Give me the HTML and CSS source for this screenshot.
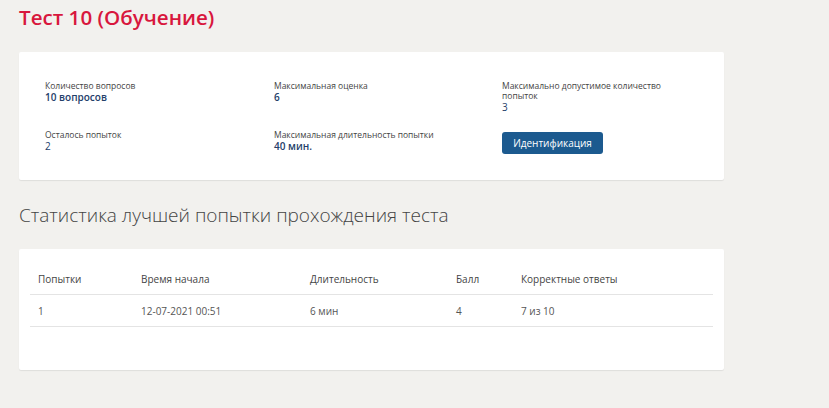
FILE: index.html
```html
<!DOCTYPE html>
<html lang="ru">
<head>
    <meta charset="UTF-8">
    <title>Тест 10 (Обучение)</title>
    <link rel="stylesheet" href="styles.css">
</head>
<body>
    <div class="page">
        <h1 class="test-title">Тест 10 (Обучение)</h1>

        <!-- Test info -->
        <div class="card info-card">
            <div class="info-grid">
                <div class="info-item">
                    <div class="info-label">Количество вопросов</div>
                    <div class="info-value">10 вопросов</div>
                </div>
                <div class="info-item">
                    <div class="info-label">Максимальная оценка</div>
                    <div class="info-value">6</div>
                </div>
                <div class="info-item">
                    <div class="info-label">Максимально допустимое количество попыток</div>
                    <div class="info-value plain">3</div>
                </div>
                <div class="info-item">
                    <div class="info-label">Осталось попыток</div>
                    <div class="info-value plain">2</div>
                </div>
                <div class="info-item">
                    <div class="info-label">Максимальная длительность попытки</div>
                    <div class="info-value">40 мин.</div>
                </div>
                <div class="info-item">
                    <button class="btn-primary">Идентификация</button>
                </div>
            </div>
        </div>

        <h2 class="section-title">Статистика лучшей попытки прохождения теста</h2>

        <!-- Best attempt -->
        <div class="card stats-card">
            <table class="stats-table">
                <thead>
                    <tr>
                        <th class="col-attempt">Попытки</th>
                        <th class="col-start">Время начала</th>
                        <th class="col-duration">Длительность</th>
                        <th class="col-score">Балл</th>
                        <th>Корректные ответы</th>
                    </tr>
                </thead>
                <tbody>
                    <tr>
                        <td>1</td>
                        <td>12-07-2021 00:51</td>
                        <td>6 мин</td>
                        <td>4</td>
                        <td>7 из 10</td>
                    </tr>
                </tbody>
            </table>
        </div>
    </div>
</body>
</html>
```

FILE: styles.css
```css
html, body {
    margin: 0;
    padding: 0;
}
body {
    background: #f2f1ee;
    font-family: "Open Sans", "Noto Sans", Arial, sans-serif;
    color: #444;
}
.page {
    width: 705px;
    padding: 0 19px 30px;
}
.test-title {
    margin: 0;
    padding-top: 4px;
    height: 48px;
    font-size: 20.6px;
    font-weight: 600;
    line-height: 26px;
    color: #d8173d;
}
.card {
    background: #fff;
    border-radius: 2px;
    box-shadow: 0 1px 1px rgba(0, 0, 0, 0.08);
}
.info-card {
    height: 128px;
    box-sizing: border-box;
    padding: 29px 26px 0;
}
.info-grid {
    display: grid;
    grid-template-columns: 229px 228px 170px;
    row-gap: 17px;
}
.info-label {
    font-size: 8.5px;
    line-height: 10px;
    color: #444;
}
.info-value {
    font-size: 10px;
    line-height: 12px;
    font-weight: 600;
    color: #24406a;
}
.info-value.plain {
    font-weight: 400;
}
.btn-primary {
    margin-top: -2px;
    background: #1c5a8f;
    color: #fff;
    border: none;
    border-radius: 3px;
    padding: 0;
    height: 22px;
    width: 101px;
    font-family: inherit;
    font-size: 10px;
    cursor: pointer;
}
.section-title {
    margin: 0;
    padding-top: 23px;
    height: 46px;
    font-size: 19px;
    font-weight: 300;
    line-height: 24px;
    color: #444;
}
.stats-card {
    height: 121px;
    box-sizing: border-box;
    padding: 14px 11px 0;
}
.stats-table {
    width: 100%;
    border-collapse: collapse;
    font-size: 10px;
}
.stats-table th,
.stats-table td {
    text-align: left;
    padding: 0 8px;
    height: 31px;
    border-bottom: 1px solid #e4e4e4;
}
.stats-table th {
    font-weight: 400;
    color: #444;
}
.stats-table td {
    color: #555;
}
.col-attempt { width: 87px; }
.col-start { width: 153px; }
.col-duration { width: 130px; }
.col-score { width: 49px; }
```
